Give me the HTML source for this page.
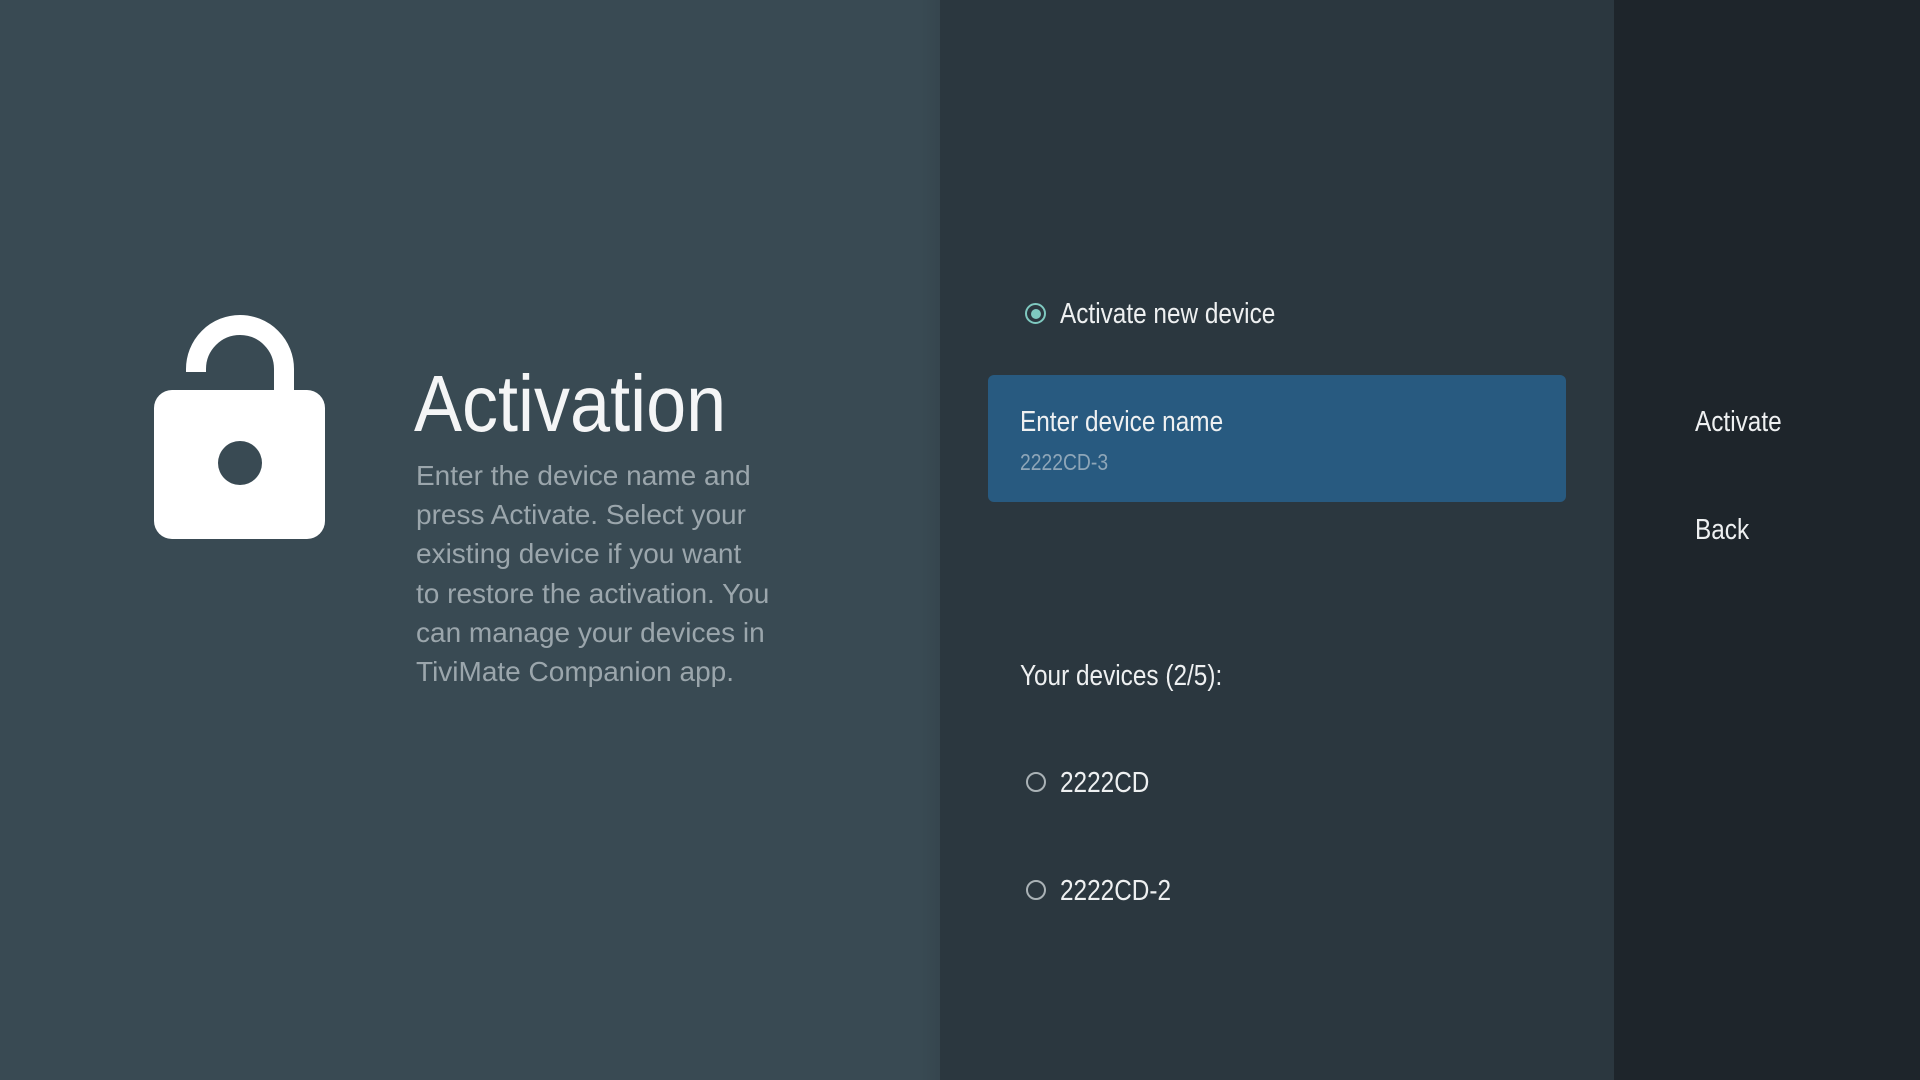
<!DOCTYPE html>
<html><head><meta charset="utf-8"><style>
html,body{margin:0;padding:0;width:1920px;height:1080px;overflow:hidden;background:#394a53;font-family:"Liberation Sans",sans-serif}
.p{position:absolute;top:0;height:1080px}
.t{position:absolute;white-space:nowrap;transform-origin:0 50%}
.c{color:#eef0f1;font-size:29px;line-height:36px;transform:scaleX(0.84)}
.r{position:absolute;width:20px;height:20px;border:2px solid #aab2b6;border-radius:50%;box-sizing:border-box}
</style></head><body>
<div class="p" style="left:0;width:940px;background:#394a53"></div>
<div class="p" style="left:920px;width:20px;background:linear-gradient(to right,rgba(0,0,0,0),rgba(0,0,0,0.06))"></div>
<div class="p" style="left:940px;width:674px;background:#2b373f"></div>
<div class="p" style="left:1614px;width:306px;background:#1e252b"></div>

<svg style="position:absolute;left:150px;top:310px;overflow:visible" width="180" height="232" viewBox="0 0 180 232">
<path d="M46 62 V59 A44 44 0 0 1 134 59 V90" fill="none" stroke="#fff" stroke-width="20"/>
<rect x="4" y="80" width="171" height="149" rx="18" fill="#fff"/>
<circle cx="90" cy="153" r="22" fill="#394a53"/>
</svg>

<div class="t" style="left:414px;top:356px;font-size:80px;line-height:96px;color:#f4f5f6;transform:scaleX(0.9)">Activation</div>
<div class="t" style="left:416px;top:456px;font-size:28px;line-height:39.2px;color:#9ba6ac;transform:scaleX(1.0);transform-origin:0 0">Enter the device name and<br>press Activate. Select your<br>existing device if you want<br>to restore the activation. You<br>can manage your devices in<br>TiviMate Companion app.</div>

<div style="position:absolute;left:1025px;top:303px;width:21px;height:21px;border:2px solid #7fc9c0;border-radius:50%;box-sizing:border-box"><div style="position:absolute;left:3.5px;top:3.5px;width:10px;height:10px;border-radius:50%;background:#7fc9c0"></div></div>
<div class="t c" style="left:1060px;top:296px">Activate new device</div>

<div style="position:absolute;left:988px;top:375px;width:578px;height:127px;background:#285a80;border-radius:6px"></div>
<div class="t c" style="left:1020px;top:404px">Enter device name</div>
<div class="t" style="left:1020px;top:448px;font-size:23px;line-height:28px;color:#8ea6b8;transform:scaleX(0.84)">2222CD-3</div>

<div class="t c" style="left:1020px;top:658px">Your devices (2/5):</div>
<div class="r" style="left:1026px;top:772px"></div>
<div class="t c" style="left:1060px;top:765px">2222CD</div>
<div class="r" style="left:1026px;top:880px"></div>
<div class="t c" style="left:1060px;top:873px">2222CD-2</div>

<div class="t c" style="left:1695px;top:404px">Activate</div>
<div class="t c" style="left:1695px;top:512px">Back</div>
</body></html>
